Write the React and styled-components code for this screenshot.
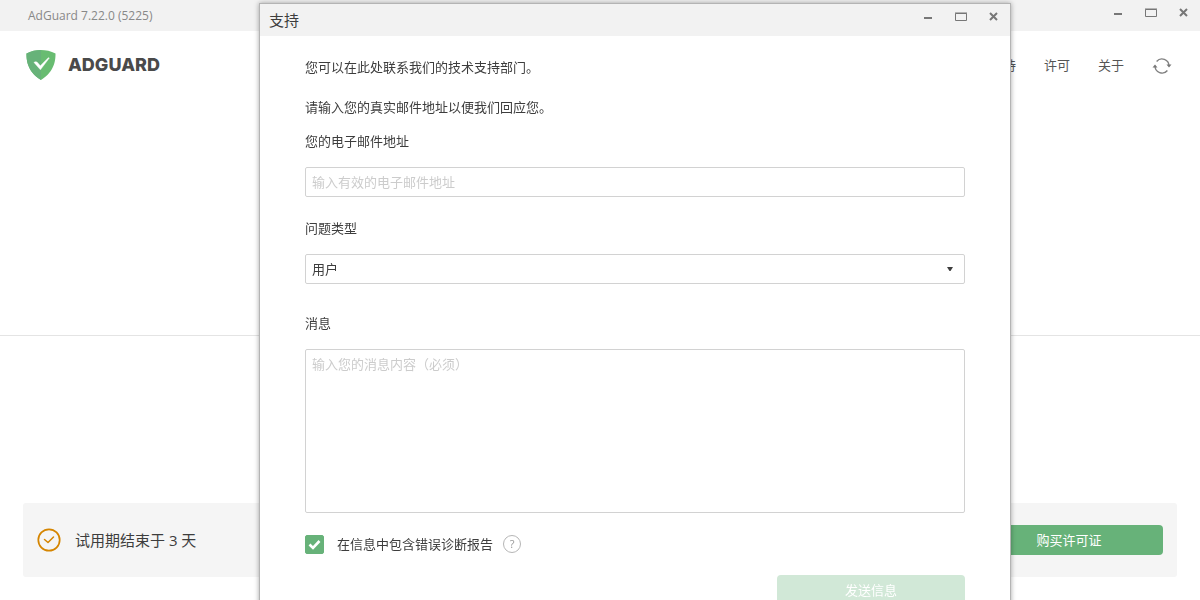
import React, { useState } from "react";
import styled, { createGlobalStyle } from "styled-components";

const GlobalStyle = createGlobalStyle`
  * {
    box-sizing: border-box;
  }
  body {
    margin: 0;
    background: #fff;
    color: #3d3d3d;
    font-family: "Open Sans", "Noto Sans CJK SC", sans-serif;
    font-size: 13px;
    line-height: 20px;
  }
  button, input, select, textarea {
    font: inherit;
    color: inherit;
  }
`;

const WindowControls = () => {
  return (
    <Controls>
      <ControlButton type="button" aria-label="最小化">
        <svg width="12" height="12" viewBox="0 0 12 12">
          <path d="M2 7h8" stroke="#777" strokeWidth="2" />
        </svg>
      </ControlButton>
      <ControlButton type="button" aria-label="最大化">
        <svg width="12" height="12" viewBox="0 0 12 12" fill="none">
          <path d="M0.500 2.500h11v7H0.500z" stroke="#777" />
          <path d="M0 2h12" stroke="#777" />
        </svg>
      </ControlButton>
      <ControlButton type="button" aria-label="关闭">
        <svg width="12" height="12" viewBox="0 0 12 12">
          <path
            d="M2 2l7 7M9 2l-7 7"
            stroke="#777"
            strokeWidth="2"
          />
        </svg>
      </ControlButton>
    </Controls>
  );
};

const Logo = () => {
  return (
    <LogoBox>
      <svg width="30" height="30" viewBox="0 0 30 31">
        <path
          d="M15 0C10.300 0 4.600 1.100 0 3.500C0 8.700-.1 21.500 15 31C30.100 21.500 30 8.700 30 3.500C25.400 1.100 19.700 0 15 0z"
          fill="#68bc71"
        />
        <path
          d="M15 31C-.1 21.500 0 8.700 0 3.500C4.600 1.100 10.300 0 15 0z"
          fill="#67b279"
        />
        <path
          d="M14.400 20.500L23.600 8.300c-.7-.5-1.300-.2-1.600.1l-7.700 7.900-2.900-3.400c-1.400-1.600-3.200-.4-3.700-.1z"
          fill="#fff"
          stroke="#fff"
          strokeWidth="0.400"
        />
      </svg>
      <LogoText>ADGUARD</LogoText>
    </LogoBox>
  );
};

const SupportDialog = () => {
  const [report, setReport] = useState(true);
  return (
    <Overlay>
      <Dialog role="dialog" aria-labelledby="dialog-title">
        <DialogBar>
          <DialogTitle id="dialog-title">支持</DialogTitle>
          <WindowControls />
        </DialogBar>
        <Form onSubmit={(e) => e.preventDefault()}>
          <Intro>您可以在此处联系我们的技术支持部门。</Intro>
          <Intro>请输入您的真实邮件地址以便我们回应您。</Intro>
          <Field $space={21}>
            <Label htmlFor="email">您的电子邮件地址</Label>
            <Input id="email" type="email" placeholder="输入有效的电子邮件地址" />
          </Field>
          <Field $space={29}>
            <Label htmlFor="type">问题类型</Label>
            <SelectBox>
              <Select id="type" defaultValue="user">
                <option value="user">用户</option>
              </Select>
              <Arrow width="6" height="4" viewBox="0 0 6 4">
                <path d="M0 0h6L3.500 4h-1z" fill="#3d3d3d" />
              </Arrow>
            </SelectBox>
          </Field>
          <Field $space={21}>
            <Label htmlFor="message">消息</Label>
            <TextArea id="message" placeholder="输入您的消息内容（必须）" />
          </Field>
          <ReportRow>
            <CheckLabel>
              <CheckBox>
                <Check
                  type="checkbox"
                  checked={report}
                  onChange={(e) => setReport(e.target.checked)}
                />
                {report && (
                  <CheckMark width="19" height="19" viewBox="0 0 19 19" fill="none">
                    <path d="M4.500 9.500l3.500 3.500L14.500 6" stroke="#fff" strokeWidth="2.600" />
                  </CheckMark>
                )}
              </CheckBox>
              在信息中包含错误诊断报告
            </CheckLabel>
            <HelpButton type="button" aria-label="帮助">
              ?
            </HelpButton>
          </ReportRow>
          <SendButton type="submit" disabled>
            发送信息
          </SendButton>
        </Form>
      </Dialog>
    </Overlay>
  );
};

const App = () => {
  return (
    <Page>
      <GlobalStyle />
      <TitleBar>
        <Version>AdGuard 7.22.0 (5225)</Version>
        <WindowControls />
      </TitleBar>
      <Header>
        <Logo />
        <Nav>
          <NavLink href="#support">支持</NavLink>
          <NavLink href="#license">许可</NavLink>
          <NavLink href="#about">关于</NavLink>
          <RefreshButton type="button" aria-label="检查更新">
            <svg width="20" height="18" viewBox="0 0 20 18" fill="none">
              <path
                d="M4.600 4.500A7 7 0 0 1 17 9M15.400 13.500A7 7 0 0 1 3 9"
                stroke="#808080"
                strokeWidth="1.400"
              />
              <path d="M14.500 7.500h5L17 10.500zM0.500 10.500h5L3 7.500z" fill="#777" />
            </svg>
          </RefreshButton>
        </Nav>
      </Header>
      <Status />
      <Bottom>
        <TrialCard>
          <svg width="24" height="24" viewBox="0 0 24 24" fill="none">
            <circle cx="12" cy="12" r="10.700" stroke="#d58500" strokeWidth="1.700" />
            <path
              d="M7.500 11.500l3.500 3L16.500 9"
              stroke="#d58500"
              strokeWidth="1.500"
              strokeLinecap="round"
              strokeLinejoin="round"
            />
          </svg>
          <TrialText>试用期结束于 3 天</TrialText>
          <BuyButton type="button">购买许可证</BuyButton>
        </TrialCard>
      </Bottom>
      <SupportDialog />
    </Page>
  );
};

const Page = styled.div`
  display: flex;
  flex-direction: column;
  min-height: 100vh;
`;

const TitleBar = styled.div`
  display: flex;
  align-items: flex-start;
  justify-content: space-between;
  height: 31px;
  padding: 6px 10px 0 28px;
  background: #f2f2f2;
`;

const Version = styled.span`
  color: #888;
  font-size: 12px;
`;

const Controls = styled.div`
  display: flex;
  gap: 21px;
`;

const ControlButton = styled.button`
  display: flex;
  padding: 1px 0;
  border: 0;
  background: none;
  cursor: pointer;
`;

const Header = styled.header`
  display: flex;
  align-items: center;
  justify-content: space-between;
  height: 68px;
  padding: 0 28px 0 26px;
`;

const LogoBox = styled.div`
  display: flex;
  align-items: center;
  gap: 12px;
`;

const LogoText = styled.span`
  color: #4a4a4a;
  font-family: Inter, sans-serif;
  font-size: 18px;
  font-weight: 800;
`;

const Nav = styled.nav`
  display: flex;
  align-items: center;
  gap: 28px;
`;

const NavLink = styled.a`
  color: #555;
  text-decoration: none;
  &:hover {
    color: #67b279;
  }
`;

const RefreshButton = styled.button`
  display: flex;
  padding: 2px 0 0;
  border: 0;
  background: none;
  cursor: pointer;
`;

const Status = styled.main`
  height: 237px;
  border-bottom: 1px solid #e4e4e4;
`;

const Bottom = styled.footer`
  display: flex;
  flex: 1;
  align-items: flex-end;
  padding: 23px;
`;

const TrialCard = styled.div`
  display: flex;
  flex: 1;
  align-items: center;
  gap: 14px;
  height: 74px;
  padding: 0 14px;
  border-radius: 3px;
  background: #f5f5f5;
`;

const TrialText = styled.span`
  flex: 1;
  font-size: 15px;
`;

const BuyButton = styled.button`
  width: 188px;
  height: 30px;
  padding: 0;
  border: 0;
  border-radius: 4px;
  background: #67b279;
  color: #fff;
  cursor: pointer;
`;

const Overlay = styled.div`
  position: fixed;
  inset: 0;
  overflow: hidden;
  pointer-events: none;
`;

const Dialog = styled.section`
  margin: 3px 189px 0 259px;
  border: 1px solid #b4b4b4;
  background: #fff;
  box-shadow: 0 0 5px rgba(0, 0, 0, 0.35);
  pointer-events: auto;
`;

const DialogBar = styled.div`
  display: flex;
  align-items: flex-start;
  justify-content: space-between;
  height: 32px;
  padding: 6px 10px 0 9px;
  background: #f2f2f2;
`;

const DialogTitle = styled.h1`
  margin: 0;
  font-size: 15px;
  font-weight: 400;
`;

const Form = styled.form`
  display: flex;
  flex-direction: column;
  padding: 21px 45px 40px;
`;

const Intro = styled.p`
  margin: 0 0 20px;
  & + & {
    margin-bottom: 14px;
  }
`;

const Field = styled.div`
  display: flex;
  flex-direction: column;
  margin-bottom: ${(props) => props.$space}px;
`;

const Label = styled.label`
  margin-bottom: 16px;
`;

const Input = styled.input`
  width: 100%;
  height: 30px;
  padding: 0 6px;
  border: 1px solid #d2d2d2;
  border-radius: 2px;
  background: #fff;
  outline: none;
  &::placeholder {
    color: #ccc;
  }
`;

const SelectBox = styled.div`
  position: relative;
`;

const Select = styled.select`
  display: block;
  width: 100%;
  height: 30px;
  padding: 0 6px;
  border: 1px solid #d2d2d2;
  border-radius: 2px;
  background: #fff;
  appearance: none;
  outline: none;
`;

const Arrow = styled.svg`
  position: absolute;
  top: 13px;
  right: 12px;
  pointer-events: none;
`;

const TextArea = styled.textarea`
  width: 100%;
  height: 164px;
  padding: 4px 6px;
  border: 1px solid #d2d2d2;
  border-radius: 2px;
  background: #fff;
  outline: none;
  resize: none;
  &::placeholder {
    color: #ccc;
  }
`;

const ReportRow = styled.div`
  display: flex;
  align-items: center;
  gap: 10px;
  margin-bottom: 21px;
`;

const CheckLabel = styled.label`
  display: flex;
  align-items: center;
  gap: 13px;
  cursor: pointer;
`;

const CheckBox = styled.span`
  position: relative;
  display: flex;
`;

const Check = styled.input`
  width: 19px;
  height: 19px;
  margin: 0;
  border: 1px solid #67b279;
  border-radius: 2px;
  appearance: none;
  &:checked {
    background: #67b279;
  }
`;

const CheckMark = styled.svg`
  position: absolute;
  inset: 0;
  pointer-events: none;
`;

const HelpButton = styled.button`
  width: 18px;
  height: 18px;
  padding: 0;
  border: 1px solid #b5b5b5;
  border-radius: 50%;
  background: #fff;
  color: #999;
  font-size: 11px;
  line-height: 16px;
  cursor: pointer;
`;

const SendButton = styled.button`
  align-self: flex-end;
  width: 188px;
  height: 30px;
  padding: 0;
  border: 0;
  border-radius: 4px;
  background: #d1e8d7;
  color: #fff;
`;

export default App;
